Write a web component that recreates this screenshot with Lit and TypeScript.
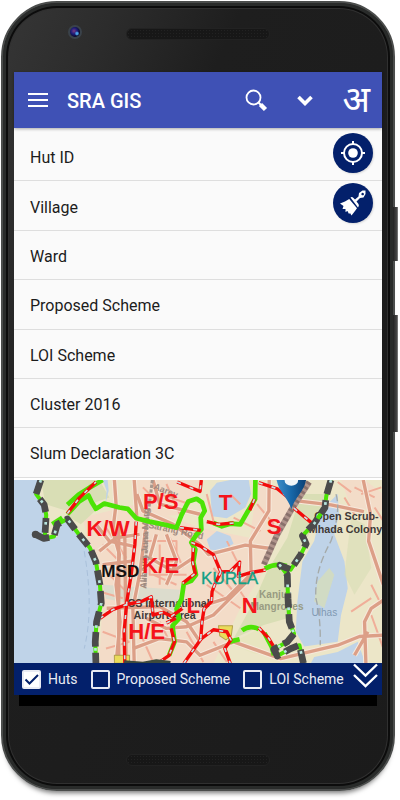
import { LitElement, html, css, svg } from "lit";
import { customElement, property } from "lit/decorators.js";

const FIELDS = ["Hut ID", "Village", "Ward", "Proposed Scheme", "LOI Scheme", "Cluster 2016", "Slum Declaration 3C"];
const LAYERS = [
  { name: "Huts", on: true },
  { name: "Proposed Scheme", on: false },
  { name: "LOI Scheme", on: false },
];

/* Ward boundaries drawn as solid green runs */
const GREEN = [
  "M205 92 L238 62 L272 40 L310 18",
  "M205 120 L240 82 L268 64 L278 85 L290 104 L315 88 L360 100 L385 104 L410 132 L450 142 L500 152 L530 160 L545 122 L565 82 L590 74 L606 85 L614 110 L602 130 L604 165 L590 180 L574 204 L586 225 L580 262 L588 300 L574 318 L552 326 L545 372 L530 402 L538 430 L518 452 L524 500 L508 540",
  "M765 18 L764 75 L742 112 L720 150 L690 148 L665 156 L640 146",
  "M793 282 Q825 264 858 274",
  "M725 466 Q748 448 775 462",
  "M792 474 L814 516 L820 540",
  "M685 500 L718 492",
  "M160 150 L190 130",
];
/* Ward boundaries drawn as red chains */
const RED = [
  "M205 118 L240 72 L290 24",
  "M410 142 L406 210 L395 300 L382 380 L374 470 L376 564",
  "M302 430 L340 404 L384 388 L425 380 L455 366 L460 420 L490 412 L515 424 L548 400",
  "M532 24 L575 42 L600 52 L604 18",
  "M540 160 L602 168 M574 204 L600 214 L640 240 L662 292 L690 290 L718 262 L714 305 L750 294 L795 286",
  "M775 26 L830 44 L870 76",
  "M880 102 L935 148",
  "M762 75 L748 108 M700 146 L655 150 L620 142",
  "M580 220 L578 262 L586 296 L548 326",
  "M662 292 L646 324 L636 350 L634 380 L612 402 L606 440 L602 492 L640 464 L680 470 L692 494 L674 520 L690 564",
  "M500 444 L528 430 M552 564 L604 490 M480 560 L508 540 L524 500 L514 460",
  "M775 458 L805 490 L818 512",
];
const COAST = [
  "M126 18 L112 60 L136 92 L142 122 L138 185",
  "M110 180 L135 192 L165 186 L175 150 L205 134 L238 178 L272 220 L290 262 L302 330 L306 385 L292 440 L288 500 L290 564",
  "M990 18 L976 66 L972 100 L940 148 L905 184 L916 208 L900 240 L870 285 L838 272 L860 300 L862 370 L866 440 L880 476 L860 500 L820 522 L830 542 L870 520 L896 510 L908 564",
];
const ROADS = [
  "M345 18 L350 90 L340 170 L360 240 L350 330 L362 440 L350 564",
  "M404 18 L412 130 M440 150 L420 300 L400 400 L404 564",
  "M290 150 L330 200 L400 215 M300 230 L350 190 L420 180 M310 270 L395 260 M322 400 L480 395 L560 440 L600 500",
  "M412 60 L430 110 L520 150 L600 210 L625 240 L735 212 L810 222",
  "M806 18 L805 110 L750 200 L752 290",
  "M460 18 L480 90 L600 120 M600 395 L680 370 L750 300",
  "M440 430 L500 460 L560 455 L640 420 L700 360 L760 300",
  "M400 520 L480 490 L560 500 L600 540 L700 500 L840 550 L1010 510 L1075 484 L1146 480",
  "M470 180 L450 250 L520 290 L580 250 M500 180 L530 260 L500 330",
  "M890 80 L990 92 L1088 112 M1086 18 L1108 120 L1102 200 L1146 330",
  "M1146 376 L1110 400 L1090 440 L1094 564 M1100 470 L1060 540",
];
const MINOR = [
  "M430 200 h100 v60 h-80 v40 h110 M480 210 v120 M510 190 l40 90 M460 300 l70 30",
  "M620 60 l20 80 M680 200 l30 60 M640 280 l60 70 M620 330 l100 70 M700 320 l40 60",
  "M310 470 l80 30 M320 520 l70 -20 M420 470 l40 90 M480 440 l30 60 M560 470 l50 90 M640 500 l40 60",
  "M1010 24 l40 30 M1060 40 l60 30 M1120 100 l26 40 M1030 70 l30 50 M1110 330 l30 60 M1080 60 l60 -20",
  "M430 40 l60 60 M500 30 l40 90 M480 60 l90 30 M700 130 l80 40 M770 90 l50 60 M690 60 l30 30",
  "M320 160 l60 90 M310 210 l70 70 M330 300 l60 60 M300 350 l70 20 M1110 420 l36 100 M1050 410 l60 -40",
];
const LABELS: [string, number, number][] = [
  ["P/S", 430, 103], ["K/W", 262, 186], ["K/E", 428, 296], ["H/E", 386, 492], ["T", 656, 108], ["S", 799, 178], ["N", 724, 415], ["L", 560, 414],
];

@customElement("ward-map")
class WardMap extends LitElement {
  static styles = css`
    :host { display: block; min-height: 0; }
    svg { display: block; width: 100%; height: 100%; font-family: "Liberation Sans", Arial, sans-serif; }
    path { fill: none; stroke-linejoin: round; }
    .water { fill: #bfd3e8; }
    .park { fill: #d9deb5; }
    .town { fill: #f3dcc8; }
    .halo { stroke: #f7e9dc; stroke-width: 16; }
    .road { stroke: #dc9f87; stroke-width: 10; }
    .minor { stroke: #f0ae99; stroke-width: 6; }
    .rail { stroke: #a7998f; stroke-width: 9; stroke-dasharray: 10 4; }
    .highway { stroke: #b0948c; stroke-width: 18; }
    .ties { stroke: #77615c; stroke-width: 16; stroke-dasharray: 8 8; opacity: 0.7; }
    .green { stroke: #4be305; stroke-width: 14; }
    .red { stroke: #f30b0b; stroke-width: 10; }
    .link { stroke: #c9e7e8; stroke-width: 5; stroke-dasharray: 12 28; }
    .shore { stroke: #4be305; stroke-width: 12; }
    .foam { stroke: #b8e6e0; stroke-width: 8; stroke-dasharray: 8 60; }
    .coast { stroke: #4b4b4b; stroke-width: 20; stroke-dasharray: 44 18; }
    .ferry { stroke: #a5aaa9; stroke-width: 4; stroke-dasharray: 22 10; }
    .badge { fill: #eadb5a; stroke: #b3a14b; stroke-width: 3; }
    .pin { fill: url(#pin); }
    .ward { fill: #f5141b; font-size: 66px; font-weight: 700; }
    .town-name { fill: #12a085; font-size: 51px; stroke: #12a085; stroke-width: 1; }
    .msd { fill: #111; font-size: 51px; font-weight: 700; }
    .place { fill: #3f3a37; font-size: 32px; font-weight: 700; }
    .faint { fill: #989b82; font-size: 30px; font-weight: 700; }
    .sea { fill: #8199b3; font-size: 30px; }
    .street { fill: #a08a80; font-size: 27px; font-weight: 700; }
  `;

  render() {
    const draw = (cls: string, list: string[]) => list.map((d) => svg`<path class=${cls} d=${d} />`);
    return html`
      <svg viewBox="42 18 1104 546" preserveAspectRatio="xMidYMid slice" role="img" aria-label="Ward map">
        <defs>
          <linearGradient id="pin" x1="0" x2="1">
            <stop offset="0" stop-color="#3f8fc9" /><stop offset="0.5" stop-color="#1767a8" /><stop offset="1" stop-color="#0c3f74" />
          </linearGradient>
        </defs>
        <rect x="0" y="0" width="1200" height="600" fill="#ece6c8" />
        <polygon class="town" points="250,130 410,90 600,160 800,200 790,290 720,400 640,564 300,564 310,380" />
        <polygon class="town" points="400,18 600,18 560,120 430,130" />
        <polygon class="town" points="770,30 900,50 800,250 750,180" />
        <polygon class="town" points="1020,18 1090,18 1146,60 1146,110 1050,100" />
        <polygon fill="#dcdccd" points="310,330 540,345 530,420 470,400 320,372" />
        <polygon class="park" points="126,18 300,18 330,70 210,112 140,90" />
        <polygon class="park" points="205,100 265,68 290,108 245,150 212,130" />
        <polygon class="park" points="900,60 980,60 930,170 860,290 860,430 790,450 700,490 760,380 800,290 860,190" />
        <polygon fill="#e8e5c0" points="720,490 780,458 815,540 760,535 700,510" />
        <polygon class="water" points="42,18 118,18 110,64 136,100 142,190 175,188 186,150 205,136 250,198 284,250 302,380 290,440 290,564 42,564" />
        <polygon class="water" points="310,18 322,50 318,90 328,50 325,18" />
        <polygon class="water" points="630,50 650,26 690,18 745,18 752,60 735,100 680,132 636,126" />
        <polygon class="water" points="620,195 650,170 690,185 700,208 660,230 630,225" />
        <polygon class="water" points="960,110 1010,60 1014,120 1000,180 1030,260 1040,340 1020,420 1010,500 910,514 885,470 890,380 905,260 940,200" />
        <polygon class="water" points="1010,530 1070,500 1092,564 930,564 940,545" />
        <polygon class="park" points="985,280 1000,300 970,400 940,380 950,320" opacity="0.7" />
        <polygon class="park" points="1050,130 1090,150 1110,280 1060,360 1030,300" opacity="0.6" />
        ${draw("minor", MINOR)} ${draw("halo", ROADS)} ${draw("road", ROADS)}
        <path class="road" d="M358 150 V564 M376 180 L380 564" />
        <path class="rail" d="M458 18 L442 150 L436 340" />
        <path class="highway" d="M925 24 L870 110 L830 180 L790 270" />
        <path class="ties" d="M925 24 L870 110 L830 180 L790 270" />
        <path class="ferry" d="M1005 60 Q1020 110 990 200 Q940 290 945 370 Q960 430 958 510" />
        <path d="M255 230 Q285 400 255 520" stroke="#a9c0da" stroke-width="3" stroke-dasharray="18 10" />
        <path class="badge" d="M345 540 h45 v24 h-45z" />
        <path class="badge" d="M655 452 h42 l-4 30 l-16 12 l-18 -12z" />
        <text class="place" x="940" y="138">Open Scrub-</text>
        <text class="place" x="924" y="175">Mhada Colony</text>
        <text class="faint" x="776" y="368">Kanjur</text>
        <text class="faint" x="750" y="405">Mangroves</text>
        <text class="sea" x="932" y="422">Ulhas</text>
        <text class="street" x="460" y="44" transform="rotate(22 460 44)">Aarey</text>
        <text class="street" x="445" y="160" transform="rotate(12 445 160)">Sarang Road</text>
        <text class="street" x="440" y="342" transform="rotate(-88 440 342)">Alibaug Juna Marg</text>
        <text class="place" x="384" y="395">CS International</text>
        <text class="place" x="402" y="431">Airport Area</text>
        ${draw("green", GREEN)} ${draw("red", RED)} ${draw("link", RED)}
        ${draw("shore", COAST)} ${draw("coast", COAST)} ${draw("foam", COAST)}
        <circle cx="110" cy="180" r="11" fill="#4b4b4b" />
        <path d="M374 560 L430 564 L470 557 L512 562" stroke="#3e4a3c" stroke-width="10" />
        ${LABELS.map(([t, x, y]) => svg`<text class="ward" x=${x} y=${y}>${t}</text>`)}
        <text class="msd" x="306" y="306">MSD</text>
        <text class="town-name" x="603" y="327">KURLA</text>
        <path class="pin" d="M828 18 C835 55 862 70 872 105 C882 70 910 52 916 18z" />
        <ellipse cx="872" cy="20" rx="20" ry="15" fill="#eff5f9" />
      </svg>
    `;
  }
}

@customElement("layer-toggle")
class LayerToggle extends LitElement {
  @property() name = "";
  @property({ type: Boolean }) on = false;
  static styles = css`
    label { display: flex; align-items: center; gap: 7px; color: #e9ebf3; font-size: 14px; line-height: 20px; white-space: nowrap; }
    .box { position: relative; display: grid; }
    input { appearance: none; box-sizing: border-box; width: 19px; height: 19px; margin: 0; border: 2px solid #e9ebf3; border-radius: 2px; }
    input:checked { background: #fff; }
    svg { position: absolute; inset: 0; pointer-events: none; }
    input:not(:checked) + svg { display: none; }
  `;
  render() {
    return html`<label>
      <span class="box">
        <input type="checkbox" .checked=${this.on} />
        <svg viewBox="0 0 19 19"><path d="M3.5 9.5 L7.5 13.5 L16 5" fill="none" stroke="#03206b" stroke-width="2" /></svg>
      </span>${this.name}</label>`;
  }
}

@customElement("app-root")
class AppRoot extends LitElement {
  static styles = css`
    :host { display: flex; box-sizing: border-box; min-height: 100vh; padding: 1px 5px 9px 1px; background: #fff; font-family: Roboto, "Noto Sans", sans-serif; }
    button { display: grid; place-items: center; padding: 0; border: 0; background: none; color: #fff; font: inherit; }
    .phone {
      position: relative; box-sizing: border-box; flex: 1; min-width: 0; display: flex; flex-direction: column;
      border: 2px solid #4b4d4c; border-radius: 56px; padding: 0 11px;
      background: linear-gradient(115deg, #363636 0, #2c2c2c 15%, #1e1e1e 32%, #1b1b1b 100%);
      box-shadow: inset 0 0 0 3px #292b2a, inset 0 0 0 5px #0c0c0c, inset 0 0 0 6px #303030, 0 6px 5px -4px #777;
    }
    .key { position: absolute; left: 100%; width: 5px; background: linear-gradient(90deg, #222, #444 70%, #888); }
    .power { top: 204px; height: 54px; }
    .volume { top: 312px; height: 117px; }
    .top { position: relative; height: 69px; flex: none; display: flex; justify-content: center; align-items: center; }
    .bottom { height: 83px; flex: none; display: flex; justify-content: center; align-items: center; padding-top: 24px; box-sizing: border-box; }
    .speaker { width: 39%; height: 12px; box-sizing: border-box; border-radius: 6px; border: 1px solid #222; background: radial-gradient(circle, #222 1px, #171717 1px) 0 0 / 3px 3px; }
    .top .speaker { margin-top: -8px; }
    .camera {
      position: absolute; left: 54px; top: 22px; box-sizing: border-box; width: 14px; height: 14px; border-radius: 50%; border: 2px solid #3a424a;
      background: radial-gradient(circle at 70% 65%, #4aa3e8 0 10%, transparent 25%), radial-gradient(circle at 40% 40%, #7b3a80 0, #1f1d7a 35%, #05051c 75%);
    }
    .screen { flex: 1; display: flex; flex-direction: column; min-height: 0; background: #fafafa; }
    header { position: relative; flex: none; height: 56px; display: flex; align-items: center; padding: 0 12px 0 14px; background: #3f51b5; box-shadow: 0 1px 3px #0005; color: #fff; }
    h1 { flex: 1; margin: 2px 0 0 19px; font-size: 20px; line-height: 28px; font-weight: 500; }
    .tools { display: flex; align-items: center; gap: 29px; }
    .list { position: relative; flex: 345 1 0; display: flex; flex-direction: column; box-sizing: border-box; padding-top: 4px; border-bottom: 2px solid #fff; }
    ul { flex: 1; margin: 0; padding: 0; list-style: none; display: grid; grid-auto-rows: 1fr; }
    li { display: grid; border-bottom: 1px solid #dedede; }
    li button { justify-content: start; padding: 4px 0 0 16px; color: #1c1c1c; font-size: 16px; line-height: 24px; }
    .fabs { position: absolute; right: 9px; top: 5px; display: grid; gap: 10px; }
    .fab { width: 40px; height: 40px; border-radius: 50%; background: #03206b; box-shadow: 1px 1px 2px #0002; }
    ward-map { flex: 183 1 0; }
    footer { position: relative; flex: none; height: 32px; display: flex; align-items: center; gap: 13px; padding-left: 8px; background: #03206b; overflow: hidden; }
    .more { position: absolute; right: 4px; top: 0; }
    .strip { flex: none; height: 11px; margin: 0 5px; background: #000; }
    svg { display: block; }
    .lang { padding-top: 8px; font-family: "Noto Sans Devanagari", "Noto Sans", sans-serif; font-size: 36px; line-height: 36px; }
  `;

  render() {
    return html`
      <div class="phone">
        <div class="key power"></div>
        <div class="key volume"></div>
        <div class="top"><div class="camera"></div><div class="speaker"></div></div>
        <main class="screen">
          <header>
            <button aria-label="Menu">
              <svg width="20" height="16" viewBox="0 0 20 16"><path d="M0 2h20M0 8h20M0 14h20" stroke="#fff" stroke-width="2" /></svg>
            </button>
            <h1>SRA GIS</h1>
            <div class="tools">
              <button aria-label="Search">
                <svg width="24" height="24" viewBox="0 0 24 24" fill="none" stroke="#fff">
                  <circle cx="9.5" cy="9.5" r="7" stroke-width="1.8" />
                  <path d="M14.5 14.5l3 3" stroke-width="2" /><path d="M16.5 16.5l5 5" stroke-width="4.5" />
                </svg>
              </button>
              <button aria-label="Expand">
                <svg width="16" height="12" viewBox="0 0 16 12"><path d="M1.500 3L8 9.500l6.500-6.500" fill="none" stroke="#fff" stroke-width="3.600" /></svg>
              </button>
              <button class="lang" aria-label="Language">अ</button>
            </div>
          </header>
          <section class="list">
            <ul>${FIELDS.map((f) => html`<li><button>${f}</button></li>`)}</ul>
            <div class="fabs">
              <button class="fab" aria-label="My location">
                <svg width="26" height="26" viewBox="0 0 26 26" fill="none" stroke="#fff" stroke-width="2">
                  <circle cx="13" cy="13" r="9" /><circle cx="13" cy="13" r="4.800" fill="#fff" stroke="none" />
                  <path d="M13 1v4M13 21v4M1 13h4M21 13h4" />
                </svg>
              </button>
              <button class="fab" aria-label="Clear map">
                <svg width="28" height="28" viewBox="0 0 28 28" fill="#fff">
                  <path fill-rule="evenodd" d="M11.500 8.500Q13 7.500 14.500 9L16 10.500 19.500 7.500 20 4 23.500 1.500H26.500V5L24.500 8.500 21 9 17.500 12.500 19.500 15Q20.500 16.500 19 18.500zM23.600 3.700a1.300 1.300 0 1 0 .1 0z" />
                  <path d="M10.200 9.900L18 19.300 16 22 12.500 26.500 11 24 10 25 8.500 22 6.500 23 6.500 20 3.500 20 4.500 17 1 14.500 6 12.500z" />
                </svg>
              </button>
            </div>
          </section>
          <ward-map></ward-map>
          <footer>
            ${LAYERS.map((l) => html`<layer-toggle .name=${l.name} .on=${l.on}></layer-toggle>`)}
            <button class="more" aria-label="More layers">
              <svg width="25" height="26" viewBox="0 0 25 26"><path d="M1 1.500l11.500 11L24 1.500M1 12l11.500 11L24 12" fill="none" stroke="#fff" stroke-width="2.400" /></svg>
            </button>
          </footer>
        </main>
        <div class="strip"></div>
        <div class="bottom"><div class="speaker"></div></div>
      </div>
    `;
  }
}
